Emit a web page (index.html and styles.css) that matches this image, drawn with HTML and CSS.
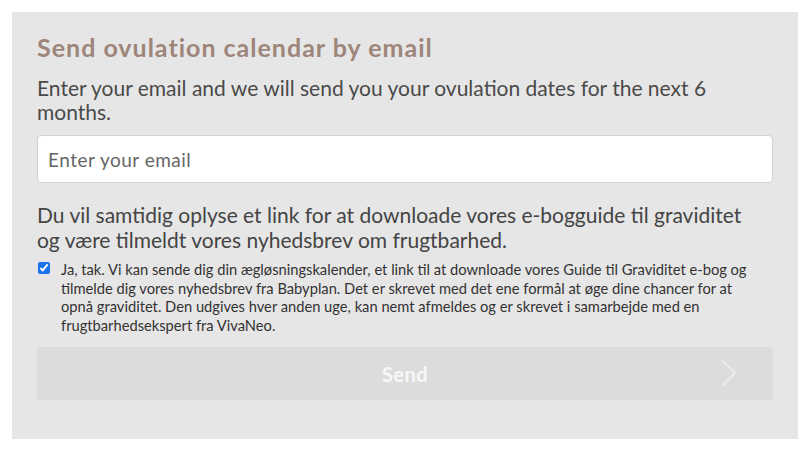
FILE: index.html
```html
<!DOCTYPE html>
<html lang="en">
<head>
<meta charset="utf-8">
<title>Send ovulation calendar by email</title>
<link rel="stylesheet" href="styles.css">
</head>
<body>
<section class="panel">
  <h2 class="title">Send ovulation calendar by email</h2>
  <p class="intro">Enter your email and we will send you your ovulation dates for the next 6 months.</p>
  <input class="email" type="email" placeholder="Enter your email">
  <p class="notice">Du vil samtidig oplyse et link for at downloade vores e-bogguide til graviditet og være tilmeldt vores nyhedsbrev om frugtbarhed.</p>
  <label class="consent">
    <input class="check" type="checkbox" checked>
    <span class="consent-text">Ja, tak. Vi kan sende dig din ægløsningskalender, et link til at downloade vores Guide til Graviditet e-bog og tilmelde dig vores nyhedsbrev fra Babyplan. Det er skrevet med det ene formål at øge dine chancer for at opnå graviditet. Den udgives hver anden uge, kan nemt afmeldes og er skrevet i samarbejde med en frugtbarhedsekspert fra VivaNeo.</span>
  </label>
  <button class="send" type="button">
    <span class="send-label">Send</span>
    <svg class="chev" width="16" height="28" viewBox="0 0 16 28"><path d="M2 2 L14 14 L2 26" fill="none" stroke="#eaeaea" stroke-width="2.2" stroke-linecap="round" stroke-linejoin="round"/></svg>
  </button>
</section>
</body>
</html>
```
FILE: styles.css
```css
* { box-sizing: border-box; }
html, body { margin: 0; background: #fff; }
body { padding: 12px 14px 16px 12px; font-family: Lato, "Noto Sans", sans-serif; }
.panel {
  background: #e6e6e6;
  padding: 20px 25px 39px 25px;
  display: flex;
  flex-direction: column;
}
.title {
  margin: 0;
  font-size: 25px;
  line-height: 30px;
  letter-spacing: 1px;
  font-weight: 700;
  color: #9e857a;
}
.intro {
  margin: 14px 0 0;
  font-size: 21px;
  line-height: 24px;
  color: #4a4a4a;
}
.email {
  margin-top: 11px;
  height: 48px;
  border: 1px solid #d2d2d2;
  border-radius: 4px;
  background: #fff;
  padding: 0 10px;
  font-family: inherit;
  font-size: 19px;
  letter-spacing: 0.5px;
  color: #555;
  outline: none;
}
.email::placeholder { color: #666; }
.notice {
  margin: 19px 0 0;
  padding-right: 12px;
  font-size: 21px;
  line-height: 25px;
  color: #444;
}
.consent {
  margin-top: 8px;
  padding-right: 16px;
  display: flex;
  align-items: flex-start;
  gap: 11px;
}
.check {
  margin: 2px 0 0 1px;
  width: 12px;
  height: 12px;
  accent-color: #1a73e8;
  flex: none;
}
.consent-text {
  font-size: 14.7px;
  line-height: 18.5px;
  color: #333;
}
.send {
  margin-top: 13px;
  height: 53px;
  border: 0;
  border-radius: 4px;
  background: #dcdcdc;
  position: relative;
  display: flex;
  align-items: center;
  justify-content: center;
  font-family: inherit;
}
.send-label {
  font-size: 20px;
  font-weight: 700;
  letter-spacing: 0.5px;
  color: #f7f7f7;
}
.chev {
  position: absolute;
  right: 36px;
  top: 12px;
}
```
